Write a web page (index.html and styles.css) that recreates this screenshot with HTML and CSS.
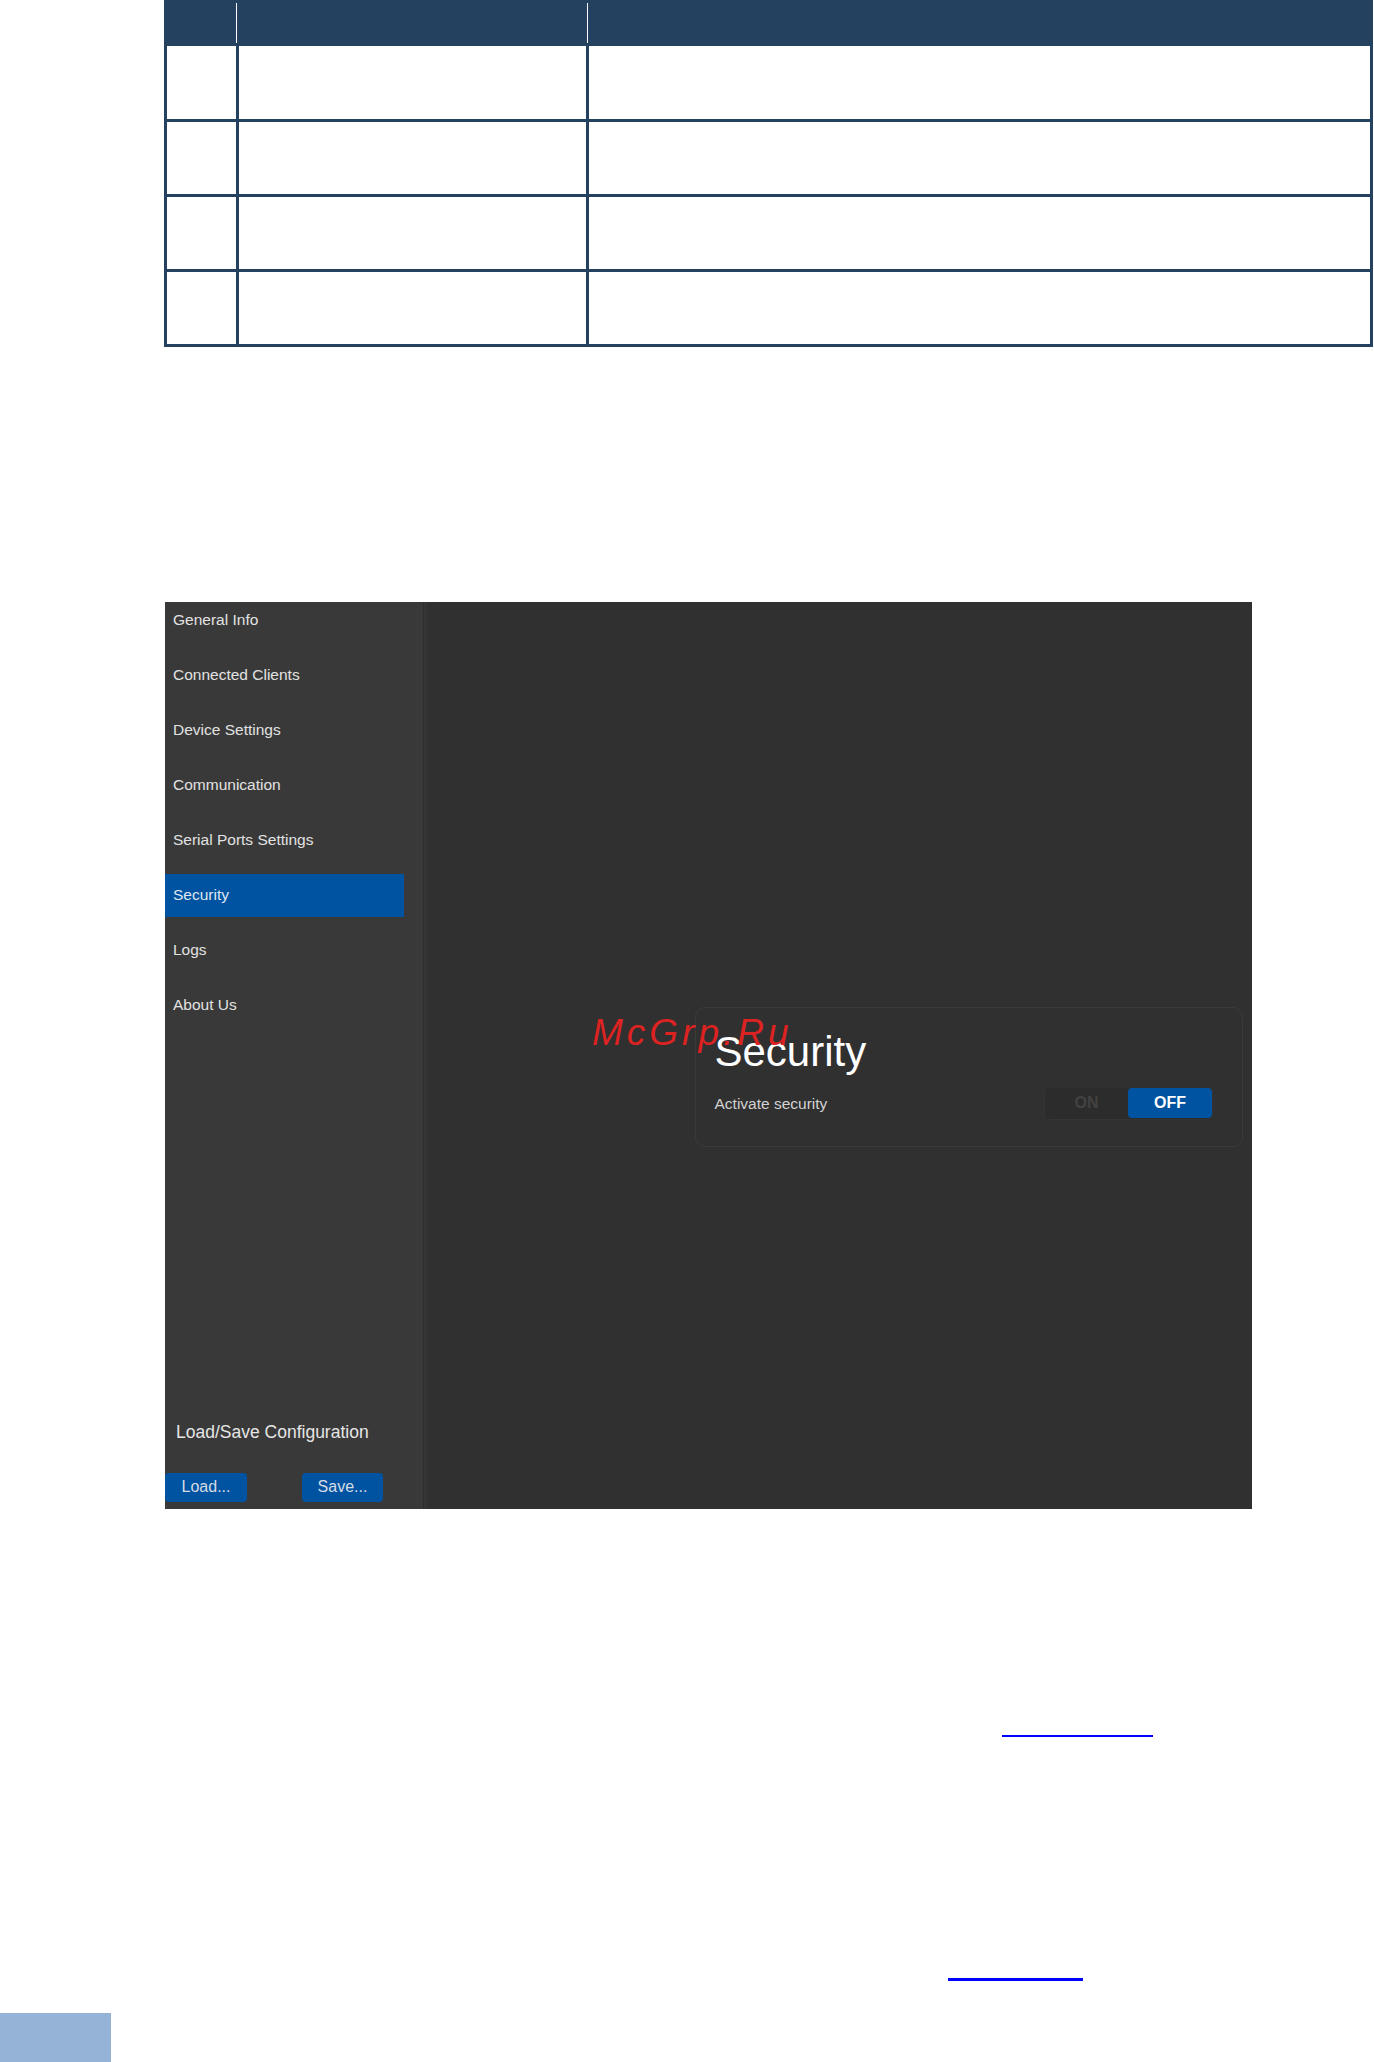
FILE: index.html
```html
<!DOCTYPE html>
<html lang="en">
<head>
<meta charset="utf-8">
<title>Security</title>
<link rel="stylesheet" href="styles.css">
</head>
<body>
<div class="spec">
  <div class="spec-head">
    <div class="hc"></div><div class="hc"></div><div class="hc"></div>
  </div>
  <div class="spec-row first"><div class="c"></div><div class="c"></div><div class="c"></div></div>
  <div class="spec-row"><div class="c"></div><div class="c"></div><div class="c"></div></div>
  <div class="spec-row"><div class="c"></div><div class="c"></div><div class="c"></div></div>
  <div class="spec-row"><div class="c"></div><div class="c"></div><div class="c"></div></div>
</div>

<div class="panel">
  <aside class="sidebar">
    <ul class="nav">
      <li class="nav-item">General Info</li>
      <li class="nav-item">Connected Clients</li>
      <li class="nav-item">Device Settings</li>
      <li class="nav-item">Communication</li>
      <li class="nav-item">Serial Ports Settings</li>
      <li class="nav-item active">Security</li>
      <li class="nav-item">Logs</li>
      <li class="nav-item">About Us</li>
    </ul>
    <div class="config">
      <div class="config-title">Load/Save Configuration</div>
      <div class="config-btns">
        <button class="btn btn-load">Load...</button>
        <button class="btn btn-save">Save...</button>
      </div>
    </div>
  </aside>
  <main class="main">
    <section class="card">
      <h1 class="card-title">Security</h1>
      <div class="card-row">
        <span class="label">Activate security</span>
        <div class="toggle">
          <span class="opt opt-on">ON</span>
          <span class="opt opt-off">OFF</span>
        </div>
      </div>
    </section>
  </main>
</div>

<span class="link-line link-a"></span>
<span class="link-line link-b"></span>
<div class="page-tab"></div>

<div class="watermark">McGrp.Ru</div>
</body>
</html>
```

FILE: styles.css
```css
html, body {
  margin: 0;
  padding: 0;
  overflow: hidden;
}
body {
  position: relative;
  width: 1374px;
  height: 2062px;
  background: #ffffff;
  font-family: "Liberation Sans", Arial, sans-serif;
}

/* spec table */
.spec {
  margin-left: 164px;
  width: 1209px;
  box-sizing: border-box;
  border: 3px solid #24415f;
  border-top: 0;
}
.spec-head {
  height: 46px;
  box-sizing: border-box;
  padding: 3px 0 3px;
  background: #24415f;
  display: grid;
  grid-template-columns: 70px 351px 1fr;
}
.hc:not(:last-child) {
  border-right: 1px solid #ffffff;
}
.spec-row {
  height: 75.3px;
  box-sizing: border-box;
  border-top: 3px solid #24415f;
  display: grid;
  grid-template-columns: 71.5px 350.5px 1fr;
}
.spec-row.first {
  height: 72.5px;
  border-top: 0;
}
.c:not(:last-child) {
  border-right: 3px solid #24415f;
}

/* UI screenshot */
.panel {
  margin: 254.6px 0 0 165px;
  width: 1087px;
  height: 907px;
  display: flex;
  background: #303030;
}
.sidebar {
  width: 259px;
  background: #393939;
  border-right: 3px solid #353535;
  box-shadow: inset -1px 0 0 #2e2e2e;
  display: flex;
  flex-direction: column;
}
.nav {
  list-style: none;
  margin: -3px 0 0;
  padding: 0;
  display: flex;
  flex-direction: column;
  gap: 12px;
}
.nav-item {
  height: 43px;
  width: 239px;
  box-sizing: border-box;
  padding-left: 8px;
  display: flex;
  align-items: center;
  font-size: 15.5px;
  color: #e2e2e2;
}
.nav-item.active {
  background: #0053a0;
  color: #dfe6f0;
}
.config {
  margin-top: auto;
  padding-bottom: 7px;
}
.config-title {
  padding-left: 11px;
  font-size: 17.5px;
  line-height: 20px;
  color: #e6e6e6;
  margin-bottom: 31px;
}
.config-btns {
  display: flex;
  gap: 55px;
}
.btn {
  height: 29px;
  border: 0;
  border-radius: 4px;
  background: #0053a0;
  color: #d6dce6;
  font-family: "Liberation Sans", Arial, sans-serif;
  font-size: 16px;
  padding: 0;
}
.btn-load { width: 82px; }
.btn-save { width: 81px; }

.main {
  flex: 1;
  padding: 405px 9px 0 268px;
  background: #303030;
}
.card {
  border: 1px solid #3a3a3a;
  border-radius: 10px;
  padding: 23.5px 29px 26px 18.5px;
}
.card-title {
  margin: 0;
  font-weight: normal;
  font-size: 42px;
  line-height: 42px;
  color: #ffffff;
}
.card-row {
  margin-top: 14.5px;
  display: flex;
  align-items: center;
  justify-content: space-between;
}
.label {
  font-size: 15.5px;
  color: #d2d2d2;
}
.toggle {
  width: 169px;
  height: 32px;
  box-sizing: border-box;
  display: flex;
  background: #2c2c2c;
  border: 1px solid #343434;
  border-top: 0;
  border-radius: 5px;
}
.opt {
  display: flex;
  align-items: center;
  justify-content: center;
  font-weight: bold;
  font-size: 16px;
}
.opt-on {
  width: 83px;
  color: #424242;
}
.opt-off {
  flex: 1;
  height: 30px;
  background: #0053a0;
  border-radius: 4px;
  color: #ffffff;
}

/* lower page */
.link-line {
  display: block;
  height: 0;
}
.link-a {
  margin: 226px 0 0 1002px;
  width: 151px;
  border-top: 2px solid #0000ff;
}
.link-b {
  margin: 241px 0 0 948px;
  width: 135px;
  border-top: 3px solid #0000ff;
}
.page-tab {
  margin-top: 32px;
  width: 111px;
  height: 49px;
  background: #95b3d7;
}

.watermark {
  position: absolute;
  left: 592px;
  top: 1014px;
  font-family: "Liberation Sans", Arial, sans-serif;
  font-style: italic;
  font-size: 37px;
  line-height: 37px;
  letter-spacing: 4px;
  color: #dd2222;
}
```
